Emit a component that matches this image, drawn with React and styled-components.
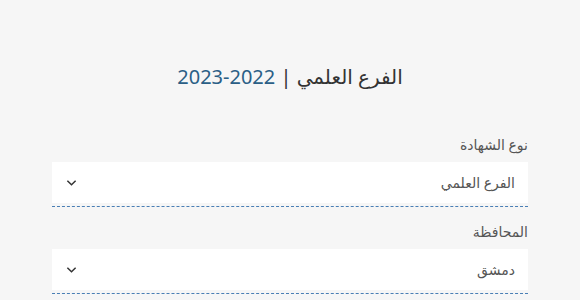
import React from 'react'
import styled, { createGlobalStyle } from 'styled-components'

const GlobalStyle = createGlobalStyle`
	body {
		margin: 0;
		background: #f6f6f6;
		font-family: "Noto Sans", "DejaVu Sans", sans-serif;
	}
`

export default function App() {
	return (
		<Page dir="rtl">
			<GlobalStyle />
			<Title>
				الفرع العلمي | <Year>2023-2022</Year>
			</Title>
			<Form>
				<Field label="نوع الشهادة" value="الفرع العلمي" />
				<Field label="المحافظة" value="دمشق" />
			</Form>
		</Page>
	)
}

function Field(props) {
	return (
		<FieldGroup>
			<Label>{props.label}</Label>
			<SelectBox>
				<Value>{props.value}</Value>
				<Chevron viewBox="0 0 12 8">
					<path d="M1.5 1.5 L6 6 L10.5 1.5" fill="none" stroke="#333" strokeWidth="1.6" />
				</Chevron>
			</SelectBox>
		</FieldGroup>
	)
}

const Page = styled.div`
	width: 476px;
	margin: 0 auto;
	padding-top: 62px;
`

const Title = styled.h2`
	margin: 0;
	text-align: center;
	font-size: 20px;
	font-weight: 400;
	line-height: 30px;
	color: #333;
`

const Year = styled.span`
	color: #2b5f86;
	direction: ltr;
	unicode-bidi: isolate;
`

const Form = styled.div`
	margin-top: 43px;
	display: flex;
	flex-direction: column;
	gap: 15px;
`

const FieldGroup = styled.div`
	display: flex;
	flex-direction: column;
`

const Label = styled.div`
	font-size: 14px;
	line-height: 20px;
	color: #555;
	padding-bottom: 7px;
`

const SelectBox = styled.div`
	height: 41px;
	background: #fff;
	display: flex;
	align-items: center;
	justify-content: space-between;
	padding: 0 13px 0 14px;
	position: relative;
	margin-bottom: 4px;

	&::after {
		content: '';
		position: absolute;
		left: 0;
		right: 0;
		bottom: -4px;
		border-bottom: 1px dashed #4a7fb5;
	}
`

const Value = styled.span`
	font-size: 14px;
	color: #555;
`

const Chevron = styled.svg`
	width: 11px;
	height: 8px;
`
